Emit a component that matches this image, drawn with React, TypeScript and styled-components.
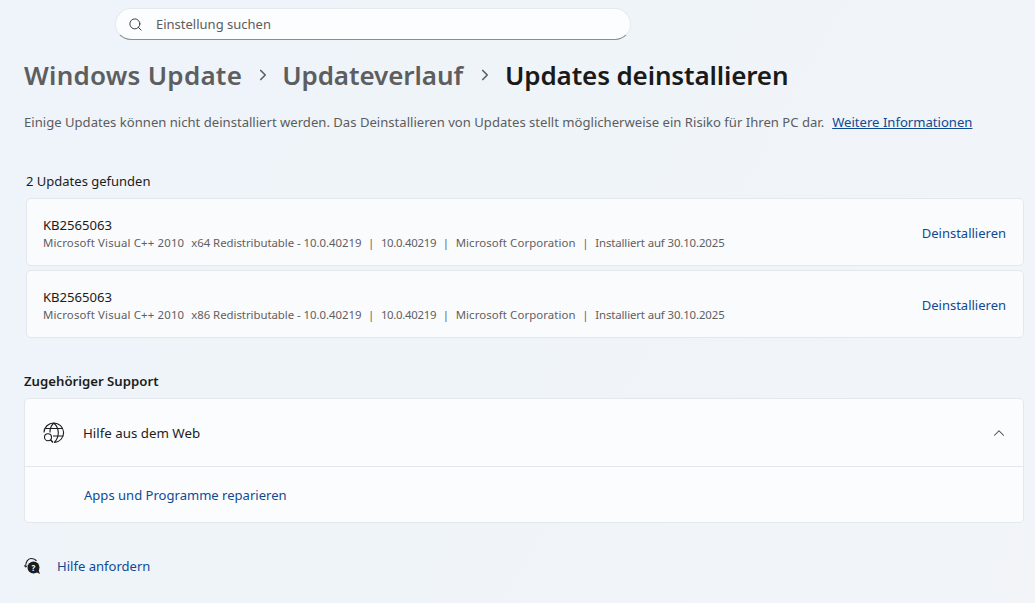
import React from 'react';
import styled, { createGlobalStyle } from 'styled-components';
import { ChevronRight, ChevronUp, Search } from 'lucide-react';

const GlobalStyle = createGlobalStyle`
  html, body {
    margin: 0;
    padding: 0;
    height: 100%;
    overflow: hidden;
  }
  body {
    font-family: "Noto Sans", "Open Sans", sans-serif;
    background: #eff4f9;
  }
`;

const Page = styled.main`
  width: 1035px;
  height: 603px;
  box-sizing: border-box;
  padding: 8px 11px 0 24px;
  overflow: hidden;
  background: linear-gradient(120deg, #eef4f9 0%, #f0f4f9 60%, #f2f4f8 100%);
`;

const SearchBar = styled.div`
  display: flex;
  align-items: center;
  width: 516px;
  height: 32px;
  box-sizing: border-box;
  margin-left: 91px;
  padding-left: 12px;
  gap: 13px;
  background: #fcfdfe;
  border: 1px solid #e5e9ed;
  border-bottom: 1px solid #8a8d90;
  border-radius: 16px;
  color: #5c5c5c;
  font-size: 13px;
`;

const Breadcrumb = styled.nav`
  display: flex;
  align-items: center;
  height: 40px;
  margin-top: 15px;
`;

const Crumb = styled.h1<{ $current?: boolean; $tracking?: number }>`
  margin: 0;
  font-size: 26px;
  font-weight: 600;
  letter-spacing: ${p => p.$tracking ?? 0}px;
  white-space: nowrap;
  color: ${p => (p.$current ? '#1a1a1a' : '#5d5e60')};
`;

const CrumbSep = styled.span<{ $width: number }>`
  display: flex;
  justify-content: center;
  box-sizing: border-box;
  width: ${p => p.$width}px;
  padding-left: 2px;
  color: #5d5e60;
`;

const Intro = styled.p`
  display: flex;
  gap: 8px;
  margin: 17px 0 0;
  font-size: 13.1px;
  line-height: 20px;
  color: #5b5c5e;
  white-space: nowrap;
`;

const TextLink = styled.a`
  color: #0f4a94;
  text-decoration: underline;
`;

const SectionLabel = styled.div`
  margin: 39px 0 0 2px;
  font-size: 13px;
  line-height: 20px;
  color: #1c1c1c;
`;

const UpdateList = styled.div`
  display: flex;
  flex-direction: column;
  gap: 4px;
  margin: 7px 0 0 2px;
`;

const UpdateRow = styled.div`
  display: flex;
  align-items: center;
  justify-content: space-between;
  height: 68px;
  box-sizing: border-box;
  padding: 2px 17px 0 16px;
  background: #fafbfd;
  border: 1px solid #e4e8ed;
  border-radius: 5px;
`;

const UpdateInfo = styled.div`
  padding-top: 1px;
`;

const UpdateTitle = styled.div`
  font-size: 13.1px;
  line-height: 18px;
  color: #1c1c1c;
`;

const UpdateMeta = styled.div`
  display: flex;
  margin-top: 1px;
  font-size: 11.4px;
  line-height: 16px;
  color: #5f6062;
  white-space: nowrap;
`;

const MetaPart = styled.span<{ $tracking: number; $gap?: number }>`
  letter-spacing: ${p => p.$tracking}px;
  margin-right: ${p => p.$gap ?? 0}px;
`;

const MetaSep = styled.span`
  width: 19.5px;
  text-align: center;
`;

const ActionLink = styled.a`
  font-size: 13px;
  color: #0f4a94;
`;

const SupportHeading = styled.h2`
  margin: 33px 0 0;
  font-size: 13.2px;
  font-weight: 600;
  line-height: 20px;
  color: #1c1c1c;
`;

const SupportCard = styled.section`
  margin-top: 7px;
  background: #fbfcfe;
  border: 1px solid #e4e8ed;
  border-radius: 5px;
`;

const SupportHeader = styled.div`
  display: flex;
  align-items: center;
  height: 67px;
  padding: 0 15px 0 18px;
  gap: 18px;
  border-bottom: 1px solid #e4e8ed;
  font-size: 13.3px;
  color: #1c1c1c;
`;

const HeaderText = styled.span`
  flex: 1;
  padding-top: 1px;
`;

const SupportBody = styled.div`
  display: flex;
  align-items: center;
  height: 55px;
  padding-left: 59px;
`;

const PlainLink = styled.a`
  font-size: 13.05px;
  color: #0f4a94;
`;

const HelpRow = styled.div`
  display: flex;
  align-items: center;
  gap: 15px;
  margin-top: 31px;
  height: 24px;
`;

const GlobeIcon = () => (
  <svg width="22" height="22" viewBox="0 0 22 22" fill="none" stroke="#1c1c1c" strokeWidth="1.1">
    <path d="M1 10.500A9.800 9.800 0 1 1 11.500 20.500" />
    <path d="M2.500 6.500H19.500M10 14H20.300M10.800 1C8 3.800 6.800 7 7 10.500M10.800 1C14 4 15.300 7.500 15.300 10.800C15.300 14.500 13.800 18 11.200 20.500" />
    <circle cx="5" cy="15.200" r="3.500" />
    <path d="M7.500 17.700L10 20.500" strokeWidth="1.400" />
  </svg>
);

const HelpIcon = () => (
  <svg width="18" height="18" viewBox="0 0 18 18">
    <path d="M1.600 9.800C1.500 5 4 1.500 7 1.500C9.500 1.500 11.500 2.500 12.500 4" fill="none" stroke="#1c1c1c" strokeWidth="1.100" />
    <path d="M0.200 8.300L1.600 10.200L3.400 8.600" fill="none" stroke="#1c1c1c" strokeWidth="1" />
    <circle cx="9.500" cy="10.500" r="6" fill="#1c1c1c" />
    <path d="M12 15L16 17L14.500 13Z" fill="#1c1c1c" />
    <text x="9.500" y="13.500" textAnchor="middle" fontSize="8" fontWeight="700" fill="#ffffff" fontFamily="Noto Sans">?</text>
  </svg>
);

const updates = [
  { arch: 'x64' },
  { arch: 'x86' },
];

export default function App() {
  return (
    <Page>
      <GlobalStyle />
      <SearchBar>
        <Search size={15} strokeWidth={1.5} color="#333" />
        <span>Einstellung suchen</span>
      </SearchBar>

      <Breadcrumb>
        <Crumb $tracking={0.25}>Windows Update</Crumb>
        <CrumbSep $width={40}><ChevronRight size={18} strokeWidth={2.2} /></CrumbSep>
        <Crumb $tracking={-0.08}>Updateverlauf</Crumb>
        <CrumbSep $width={42}><ChevronRight size={18} strokeWidth={2.2} /></CrumbSep>
        <Crumb $current $tracking={-0.14}>Updates deinstallieren</Crumb>
      </Breadcrumb>

      <Intro>
        <span>Einige Updates können nicht deinstalliert werden. Das Deinstallieren von Updates stellt möglicherweise ein Risiko für Ihren PC dar.</span>
        <TextLink>Weitere Informationen</TextLink>
      </Intro>

      <SectionLabel>2 Updates gefunden</SectionLabel>
      <UpdateList>
        {updates.map(u => (
          <UpdateRow key={u.arch}>
            <UpdateInfo>
              <UpdateTitle>KB2565063</UpdateTitle>
              <UpdateMeta>
                <MetaPart $tracking={0.16} $gap={7}>Microsoft Visual C++ 2010</MetaPart>
                <MetaPart $tracking={-0.04}>{u.arch} Redistributable - 10.0.40219</MetaPart>
                <MetaSep>|</MetaSep>
                <MetaPart $tracking={-0.3}>10.0.40219</MetaPart>
                <MetaSep>|</MetaSep>
                <MetaPart $tracking={0.1}>Microsoft Corporation</MetaPart>
                <MetaSep>|</MetaSep>
                <MetaPart $tracking={-0.12}>Installiert auf 30.10.2025</MetaPart>
              </UpdateMeta>
            </UpdateInfo>
            <ActionLink>Deinstallieren</ActionLink>
          </UpdateRow>
        ))}
      </UpdateList>

      <SupportHeading>Zugehöriger Support</SupportHeading>
      <SupportCard>
        <SupportHeader>
          <GlobeIcon />
          <HeaderText>Hilfe aus dem Web</HeaderText>
          <ChevronUp size={18} strokeWidth={1.4} color="#444" />
        </SupportHeader>
        <SupportBody>
          <PlainLink>Apps und Programme reparieren</PlainLink>
        </SupportBody>
      </SupportCard>

      <HelpRow>
        <HelpIcon />
        <PlainLink>Hilfe anfordern</PlainLink>
      </HelpRow>
    </Page>
  );
}
